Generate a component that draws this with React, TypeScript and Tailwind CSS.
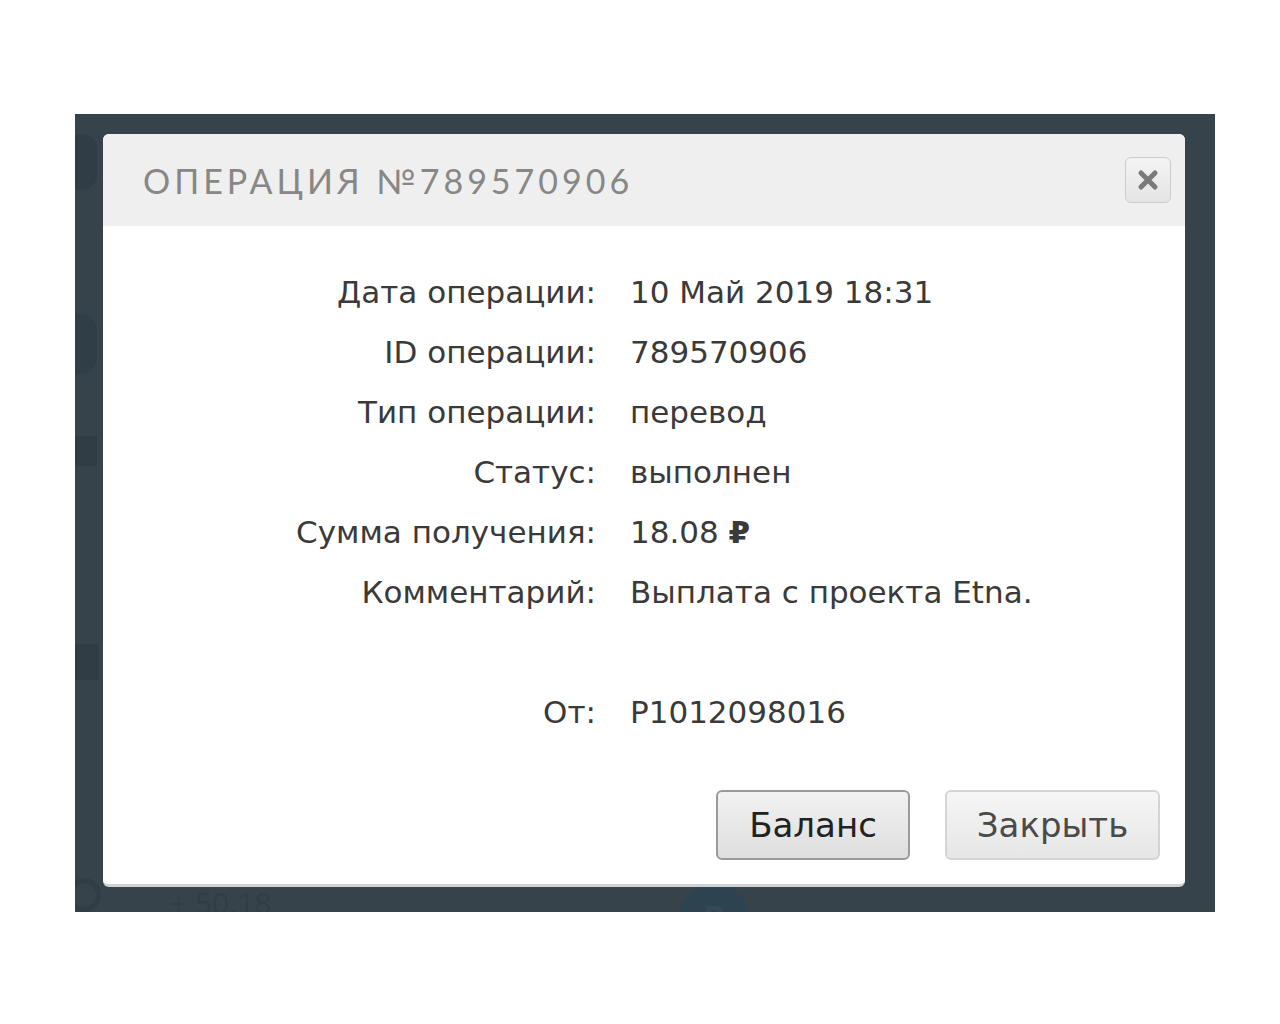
import React from 'react';

const rows: { label: string; value: React.ReactNode }[] = [
  { label: 'Дата операции:', value: '10 Май 2019 18:31' },
  { label: 'ID операции:', value: '789570906' },
  { label: 'Тип операции:', value: 'перевод' },
  { label: 'Статус:', value: 'выполнен' },
  {
    label: 'Сумма получения:',
    value: (
      <>
        18.08 <span className="font-bold">₽</span>
      </>
    ),
  },
  { label: 'Комментарий:', value: 'Выплата с проекта Etna.' },
];

const Row = ({ label, value }: { label: string; value: React.ReactNode }) => (
  <div className="flex h-[60px] items-center">
    <div className="w-[493px] text-right">{label}</div>
    <div className="pl-[34px]">{value}</div>
  </div>
);

export default function App() {
  return (
    <div className="min-h-[1024px] bg-white pt-[114px] pl-[75px] font-['Open_Sans',sans-serif]">
      <div className="relative w-[1140px] h-[798px] overflow-hidden bg-[#37434b] pl-[28px] pt-[20px]">
        {/* faint page content behind the overlay */}
        <div className="absolute left-[95px] top-[766px] text-[30px] text-[#313d45]">+ 50.18</div>
        <div className="absolute left-[-8px] top-[764px] h-[34px] w-[34px] rounded-full border-[5px] border-[#313d45]" />
        <div className="absolute left-[603px] top-[770px] h-[72px] w-[72px] rounded-full bg-[#2e4350] flex items-start justify-center pt-[8px] text-[34px] font-bold text-[#354a57]">
          P
        </div>
        <div className="absolute left-[-8px] top-[20px] h-[56px] w-[30px] rounded-full bg-[#303d46]" />
        <div className="absolute left-[-12px] top-[200px] h-[60px] w-[34px] rounded-full bg-[#303e48]" />
        <div className="absolute left-[0px] top-[322px] h-[30px] w-[22px] bg-[#313d45]" />
        <div className="absolute left-[0px] top-[530px] h-[36px] w-[24px] bg-[#313d45]" />

        <div className="relative w-[1082px] h-[753px] rounded-[6px] bg-white border-b-[3px] border-[#cfd1d2] overflow-hidden flex flex-col">
          <div className="h-[92px] shrink-0 bg-[#efefef] flex items-center justify-between pl-[40px] pr-[14px]">
            <h1 className="text-[34px] tracking-[4px] text-[#878787] font-['Lato',sans-serif] font-normal">
              ОПЕРАЦИЯ №789570906
            </h1>
            <button className="h-[46px] w-[46px] rounded-[6px] border border-[#cdcdcd] bg-gradient-to-b from-[#f4f4f4] to-[#e4e4e4] flex items-center justify-center">
              <svg width="24" height="24" viewBox="0 0 24 24">
                <path d="M5 5 L19 19 M19 5 L5 19" stroke="#7a7a7a" strokeWidth="5" strokeLinecap="round" />
              </svg>
            </button>
          </div>

          <div className="pt-[36px] text-[31px] text-[#3a3a3a] font-['DejaVu_Sans',sans-serif]">
            {rows.map((r) => (
              <Row key={r.label} label={r.label} value={r.value} />
            ))}
            <div className="h-[60px]" />
            <Row label="От:" value="P1012098016" />
          </div>

          <div className="mt-auto flex justify-end gap-[35px] pr-[25px] pb-[24px]">
            <button className="h-[70px] w-[194px] rounded-[6px] border-2 border-[#9a9a9a] bg-gradient-to-b from-[#f2f2f2] to-[#dedede] text-[34px] text-[#222] font-['DejaVu_Sans',sans-serif]">
              Баланс
            </button>
            <button className="h-[70px] w-[215px] rounded-[6px] border-2 border-[#d4d4d4] bg-gradient-to-b from-[#f6f6f6] to-[#e6e6e6] text-[34px] text-[#4a4a4a] font-['DejaVu_Sans',sans-serif]">
              Закрыть
            </button>
          </div>
        </div>
      </div>
    </div>
  );
}
